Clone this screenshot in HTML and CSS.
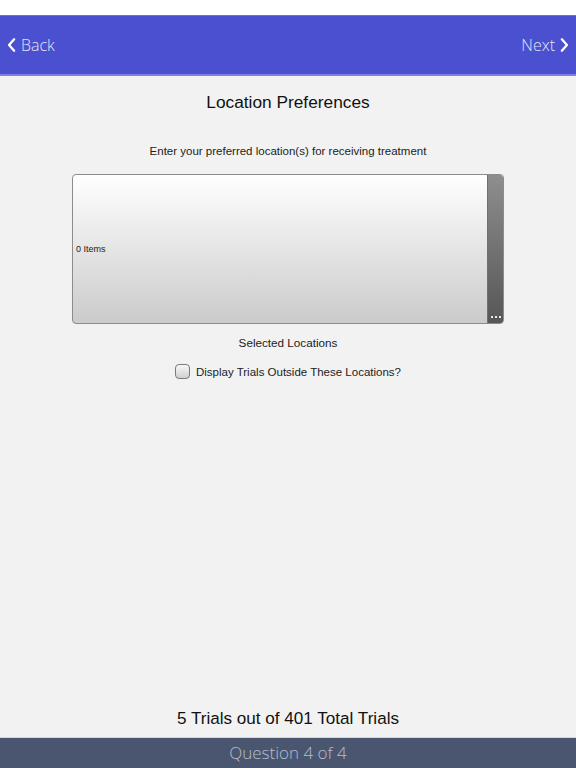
FILE: index.html
```html
<!DOCTYPE html>
<html>
<head>
<meta charset="utf-8">
<link rel="stylesheet" href="styles.css">
</head>
<body>
<div class="page">
  <div class="status"></div>
  <header class="nav">
    <a class="nav-btn back"><svg class="chev" viewBox="0 0 10 16" width="9" height="14"><path d="M8 1.5 L2.2 8 L8 14.5" fill="none" stroke="#fff" stroke-width="2.6" stroke-linecap="round" stroke-linejoin="round"/></svg><span>Back</span></a>
    <a class="nav-btn next"><span>Next</span><svg class="chev" viewBox="0 0 10 16" width="9" height="14"><path d="M2 1.5 L7.8 8 L2 14.5" fill="none" stroke="#fff" stroke-width="2.6" stroke-linecap="round" stroke-linejoin="round"/></svg></a>
  </header>
  <main class="content">
    <h1 class="title">Location Preferences</h1>
    <p class="subtitle">Enter your preferred location(s) for receiving treatment</p>
    <div class="listbox">
      <div class="list-area"><span class="count">0 Items</span></div>
      <div class="scroll"><span class="dots"><i></i><i></i><i></i></span></div>
    </div>
    <p class="caption">Selected Locations</p>
    <label class="check-row"><span class="checkbox"></span><span>Display Trials Outside These Locations?</span></label>
  </main>
  <div class="summary">5 Trials out of 401 Total Trials</div>
  <footer class="bar">Question 4 of 4</footer>
</div>
</body>
</html>
```
FILE: styles.css
```css
html, body {
  margin: 0;
  padding: 0;
}
body {
  background: #f2f2f2;
  font-family: "Liberation Sans", Arial, sans-serif;
  color: #1a1a1a;
}
.page {
  height: 768px;
  display: flex;
  flex-direction: column;
}
.status {
  height: 15px;
  background: #ffffff;
}
.nav {
  height: 58px;
  background: #4a50cf;
  border-top: 1px solid #6c70dc;
  border-bottom: 2px solid #7b80e0;
  display: flex;
  align-items: center;
  justify-content: space-between;
  padding: 0 7px 0 7px;
}
.nav-btn {
  display: flex;
  align-items: center;
  gap: 5px;
  color: #e2e3f8;
  font-family: "Open Sans", "Liberation Sans", sans-serif;
  font-weight: 300;
  font-size: 16px;
  margin-top: -1px;
}
.chev {
  display: block;
}
.content {
  flex: 1;
  display: flex;
  flex-direction: column;
  align-items: center;
}
.title {
  margin: 14px 0 0;
  font-weight: normal;
  font-size: 17.3px;
  line-height: 24px;
  color: #111;
}
.subtitle {
  margin: 29px 0 0;
  font-size: 11.5px;
  line-height: 16px;
  color: #222;
}
.listbox {
  margin-top: 15px;
  width: 430px;
  height: 148px;
  border: 1px solid #8c8c8c;
  border-radius: 4px;
  display: flex;
  overflow: hidden;
  background: linear-gradient(#ffffff, #cbcbcb);
}
.list-area {
  flex: 1;
  display: flex;
  align-items: center;
  padding-left: 3px;
}
.count {
  font-size: 9px;
  color: #222;
}
.scroll {
  width: 15px;
  background: linear-gradient(#8e8e8e, #565656);
  border-left: 1px solid #707070;
  display: flex;
  align-items: flex-end;
  justify-content: center;
}
.dots {
  display: flex;
  gap: 2px;
  margin-bottom: 5px;
}
.dots i {
  width: 2px;
  height: 2px;
  background: #e8e8e8;
  display: block;
}
.caption {
  margin: 11px 0 0;
  font-size: 11.7px;
  line-height: 16px;
  color: #222;
}
.check-row {
  margin-top: 13px;
  display: flex;
  align-items: center;
  gap: 6px;
  font-size: 11.5px;
  color: #222;
}
.checkbox {
  width: 13px;
  height: 13px;
  border: 1px solid #7a7a7a;
  border-radius: 4px;
  background: linear-gradient(#f7f7f7, #d0d0d0);
}
.summary {
  text-align: center;
  font-size: 17.1px;
  line-height: 22px;
  color: #111;
  padding-bottom: 7px;
}
.bar {
  height: 30px;
  background: #4a5670;
  border-top: 1px solid #d8d8d8;
  color: #b6bccb;
  font-family: "Open Sans", "Liberation Sans", sans-serif;
  font-weight: 300;
  font-size: 17px;
  line-height: 30px;
  text-align: center;
}
```
